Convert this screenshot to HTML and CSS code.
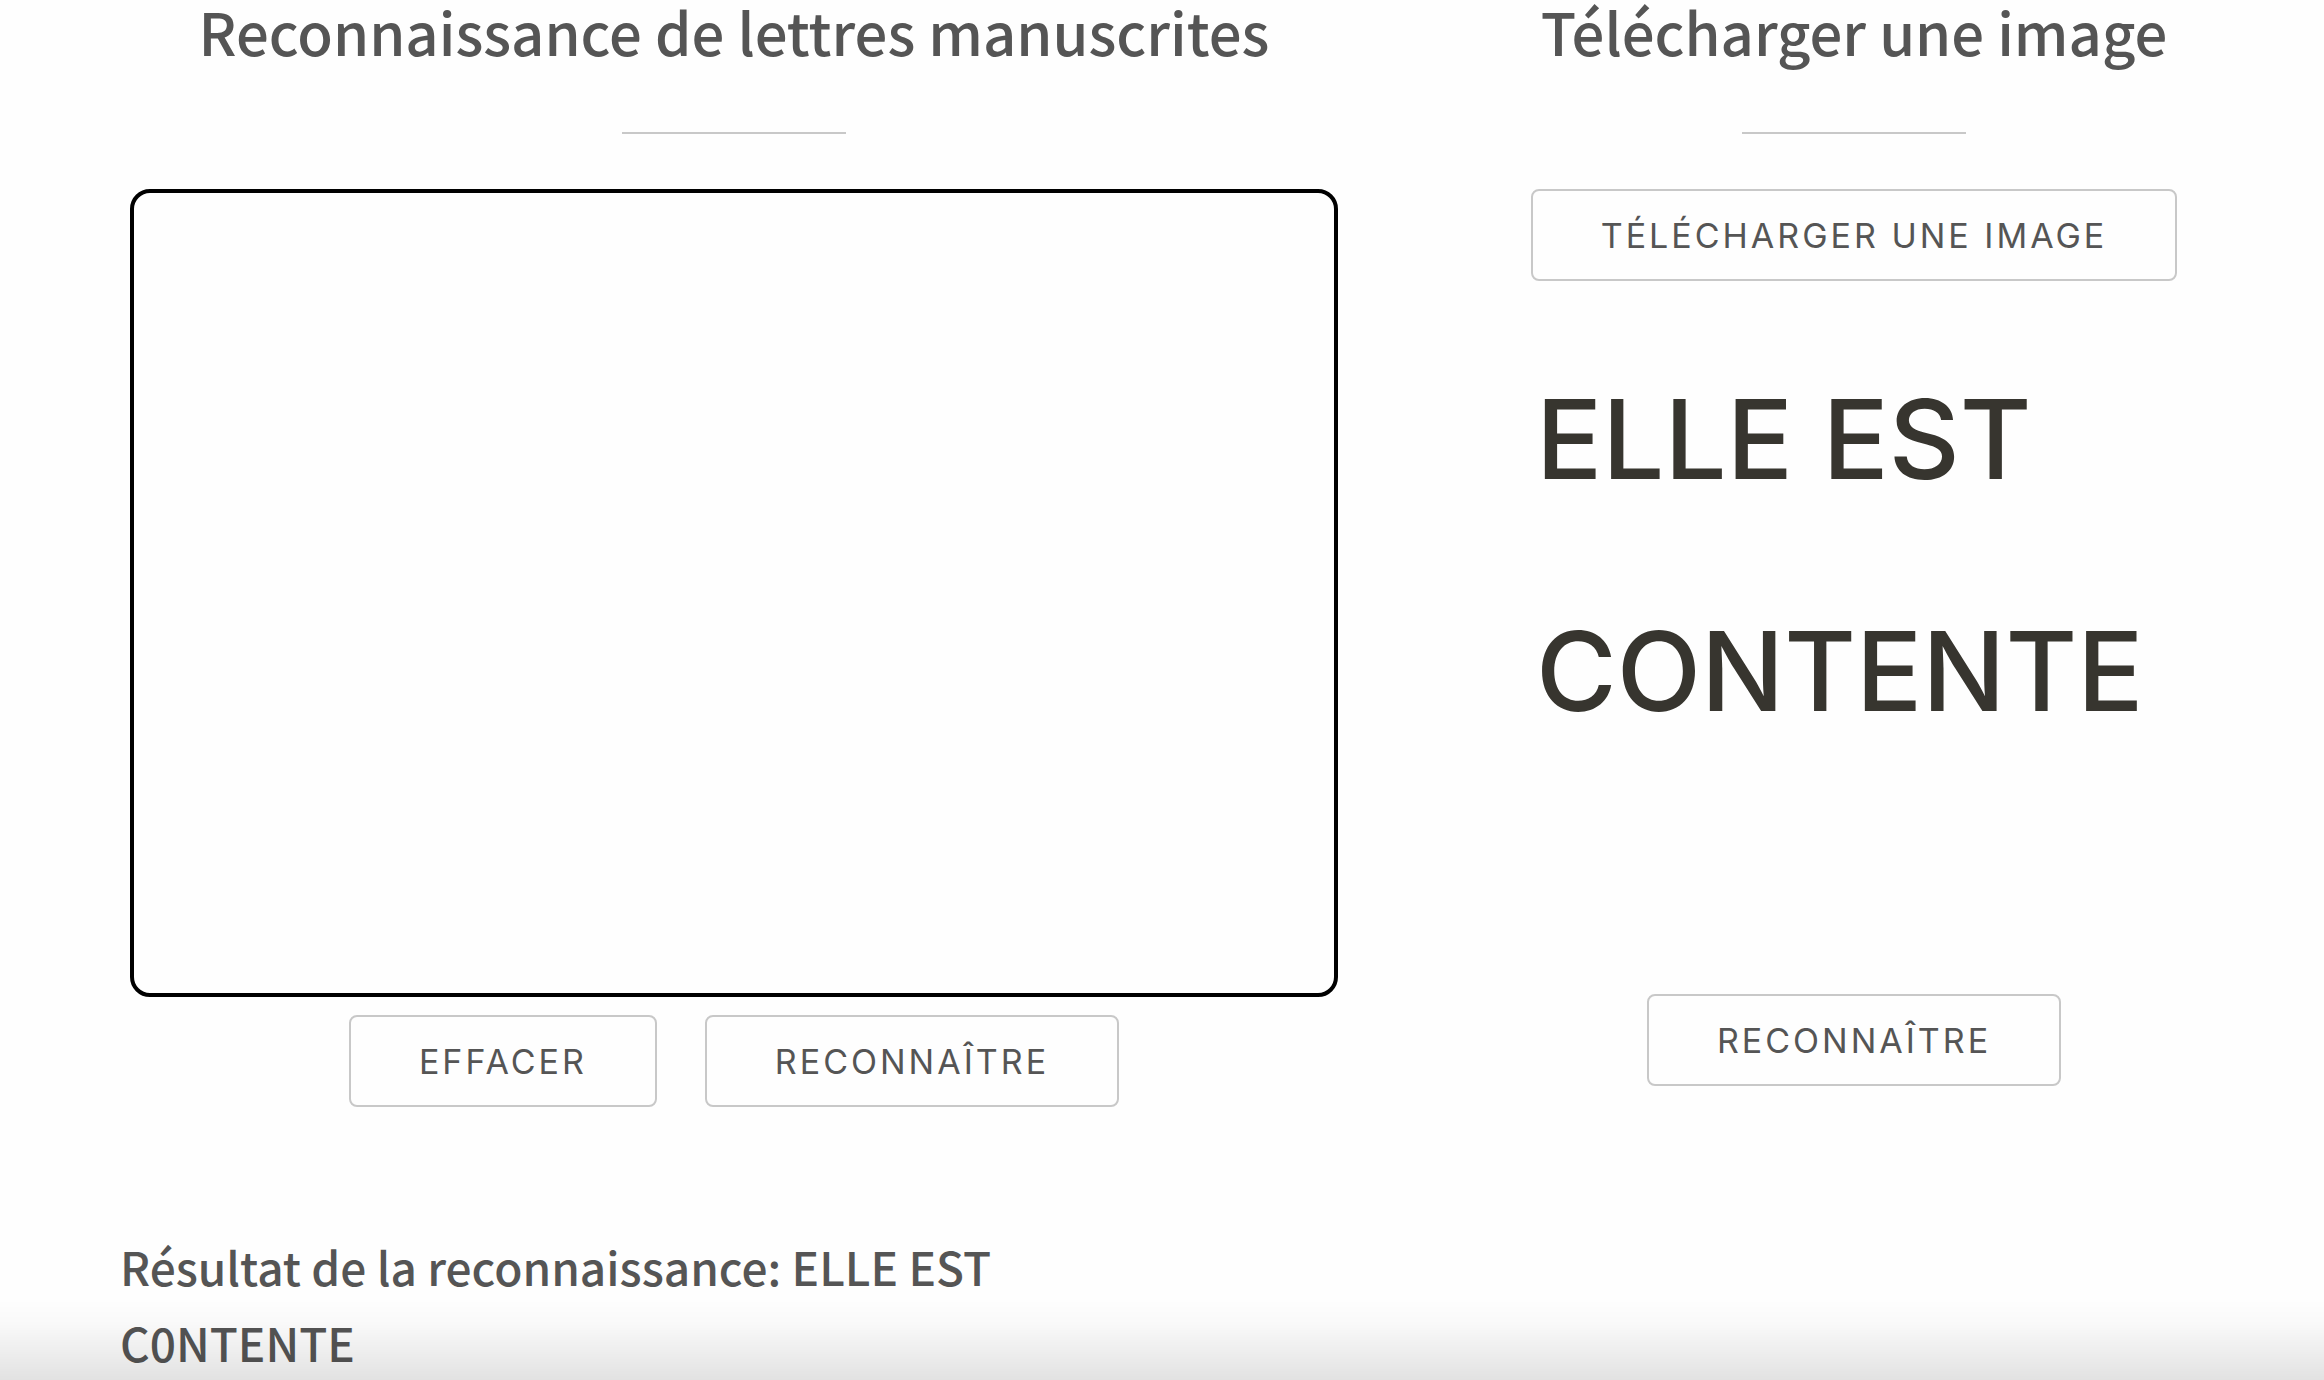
FILE: index.html
```html
<!DOCTYPE html>
<html lang="fr">
<head>
<meta charset="utf-8">
<meta name="viewport" content="width=device-width, initial-scale=1">
<title>Reconnaissance de lettres manuscrites</title>
<link rel="stylesheet" href="styles.css">
</head>
<body>
<main class="page">
  <div class="tools">
    <section class="tool">
      <h2 class="title">Reconnaissance de lettres manuscrites</h2>
      <canvas class="board" aria-label="Zone de dessin"></canvas>
      <div class="actions">
        <button class="button" type="button">Effacer</button>
        <button class="button" type="button">Reconnaître</button>
      </div>
    </section>
    <section class="tool">
      <h2 class="title">Télécharger une image</h2>
      <button class="button" type="button">Télécharger une image</button>
      <p class="preview">ELLE EST<br>CONTENTE</p>
      <button class="button" type="button">Reconnaître</button>
    </section>
  </div>
  <h3 class="result">Résultat de la reconnaissance: ELLE EST C0NTENTE</h3>
</main>
<div class="fade"></div>
</body>
</html>
```
FILE: styles.css
```css
* {
  box-sizing: border-box;
}

body {
  margin: 0;
  background: #fefefe;
  color: #555;
  font-family: Inter, sans-serif;
}

.page {
  padding: 0 120px;
}

.tools {
  display: grid;
  grid-template-columns: minmax(0, 1228fr) minmax(0, 700fr);
  gap: 156px;
}

.tool {
  display: flex;
  flex-direction: column;
  align-items: center;
}

.title,
.result {
  margin: 0;
  font-family: "Noto Sans CJK SC", sans-serif;
  font-weight: 500;
}

.title {
  display: flex;
  flex-direction: column;
  align-items: center;
  gap: 70px;
  margin-bottom: 55px;
  font-size: 58px;
  line-height: 62px;
  white-space: nowrap;
}

.title::after {
  content: "";
  width: 224px;
  height: 2px;
  background: #c8c8c8;
}

.board {
  width: calc(100% - 20px);
  aspect-ratio: 1208 / 808;
  border: 4px solid #000;
  border-radius: 20px;
}

.actions {
  display: flex;
  gap: 48px;
  margin-top: 18px;
}

.button {
  height: 92px;
  padding: 0 68px;
  border: 2px solid #c8c8c8;
  border-radius: 8px;
  background: transparent;
  color: #555;
  font-family: inherit;
  font-size: 34px;
  letter-spacing: 3px;
  text-transform: uppercase;
  white-space: nowrap;
}

.preview {
  width: 636px;
  min-height: 671px;
  margin: 42px 0 0;
  color: #37352f;
  font-size: 110px;
  font-weight: 500;
  line-height: 232px;
}

.result {
  width: 50%;
  margin-top: 121px;
  font-size: 46px;
  line-height: 76px;
}

.fade {
  position: fixed;
  inset: auto 0 0;
  height: 80px;
  background: linear-gradient(transparent, rgba(0, 0, 0, 0.02) 30%, rgba(0, 0, 0, 0.11));
  pointer-events: none;
}
```
